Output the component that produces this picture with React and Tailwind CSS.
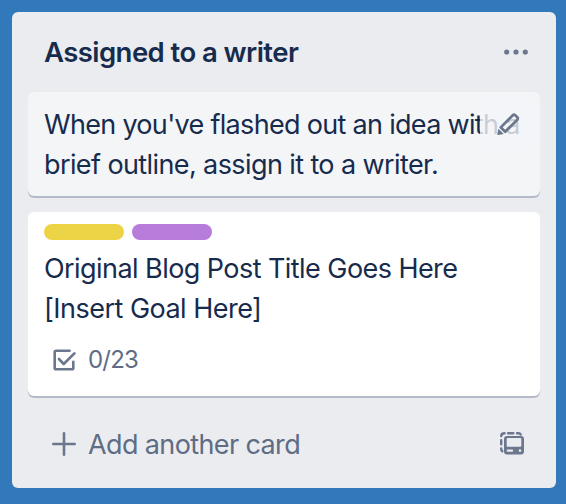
import React from 'react';

function DotsIcon() {
  return (
    <svg className="h-6 w-6" viewBox="0 0 24 24" fill="#6b778c">
      <circle cx="2.7" cy="12" r="2.6" />
      <circle cx="12" cy="12" r="2.6" />
      <circle cx="21.3" cy="12" r="2.6" />
    </svg>
  );
}

function PencilIcon() {
  return (
    <svg className="h-6 w-6" viewBox="0 0 24 24" fill="none" stroke="#6b778c" strokeWidth="2.7" strokeLinejoin="round">
      <path d="M4.8 15.4 L16.8 3.2 Q18 2 19.2 3.2 L21.3 5.3 Q22.5 6.5 21.3 7.7 L9.2 19.8 Z" />
      <path d="M2.5 16.8 L7.7 22 L2 23 Q1.2 23 1.3 22.2 Z" fill="#6b778c" stroke="none" />
    </svg>
  );
}

function ChecklistIcon() {
  return (
    <svg className="h-6 w-6" viewBox="0 0 24 24" fill="none" stroke="#6b778c" strokeWidth="2.6" strokeLinecap="round" strokeLinejoin="round">
      <path d="M17.6 2.7 H4 Q2.7 2.7 2.7 4 V20 Q2.7 21.3 4 21.3 H20 Q21.3 21.3 21.3 20 V13.8" />
      <path d="M7 11 L11.7 16 L22.4 5.4" />
    </svg>
  );
}

function PlusIcon() {
  return (
    <svg className="h-6 w-6" viewBox="0 0 24 24" stroke="#6b778c" strokeWidth="2.6" strokeLinecap="round">
      <path d="M12 1.3 V22.7 M1.3 12 H22.7" />
    </svg>
  );
}

function TemplateIcon() {
  return (
    <svg className="h-6 w-6" viewBox="0 0 24 24" fill="none" stroke="#6b778c" strokeWidth="2.4">
      <path d="M1.2 4 Q1.2 1.3 4.6 1.3" strokeLinecap="round" />
      <path d="M8.1 1.3 H13.3 M17 1.3 H18.8 Q20 1.4 20.6 2.4" strokeLinecap="round" />
      <path d="M1.2 8.1 V12.2 M1.2 16.5 V17.4 Q1.4 18.5 2.3 19.2" strokeLinecap="round" />
      <path fill="#6b778c" stroke="none" fillRule="evenodd" d="M7 4 H21 Q24 4 24 7 V19.6 Q24 22.6 21 22.6 H7 Q4 22.6 4 19.6 V7 Q4 4 7 4 Z M7.6 6 Q6.7 6 6.7 6.9 V13.8 Q6.7 14.7 7.6 14.7 H20.4 Q21.3 14.7 21.3 13.8 V6.9 Q21.3 6 20.4 6 Z M7.9 17.4 Q6.7 17.4 6.7 18.6 Q6.7 19.8 7.9 19.8 H12 Q13.2 19.8 13.2 18.6 Q13.2 17.4 12 17.4 Z M20 17.3 A1.3 1.3 0 1 0 20 19.9 A1.3 1.3 0 1 0 20 17.3 Z" />
    </svg>
  );
}

export default function App() {
  return (
    <div className="h-[504px] w-[566px] bg-[#3179ba] pt-3 pl-3 font-['Inter','Liberation_Sans',sans-serif] text-[27px] leading-10 whitespace-nowrap text-[#172b4d]">
      <section className="flex h-[476px] w-[544px] flex-col rounded-md bg-[#ebecf0] px-4">
        <header className="flex h-20 items-center justify-between pr-3 pl-4">
          <h2 className="text-[27.5px] font-semibold tracking-[-0.56px]">Assigned to a writer</h2>
          <DotsIcon />
        </header>

        <article className="relative h-[104px] rounded-md bg-[#f4f5f7] px-4 pt-[13px] shadow-[0_2px_0_#b3bac8]">
          <p className="tracking-[-0.69px]">When you've flashed out an idea with a</p>
          <p className="tracking-[-0.6px]">brief outline, assign it to a writer.</p>
          <button className="absolute top-1 right-1 flex h-14 w-14 items-center justify-center rounded-md bg-[#f4f5f7]/80">
            <PencilIcon />
          </button>
        </article>

        <article className="mt-4 h-[184px] rounded-md bg-white px-4 pt-3 shadow-[0_2px_0_#b3bac8]">
          <div className="flex gap-2">
            <span className="h-4 w-20 rounded-full bg-[#edd447]" />
            <span className="h-4 w-20 rounded-full bg-[#b87ddb]" />
          </div>
          <p className="mt-[9px] tracking-[-0.56px]">Original Blog Post Title Goes Here</p>
          <p className="tracking-[-0.52px]">[Insert Goal Here]</p>
          <div className="mt-[11px] flex h-10 items-center gap-3 pl-2 text-2xl text-[#5e6c84]">
            <ChecklistIcon />
            <span className="tracking-[-0.8px]">0/23</span>
          </div>
        </article>

        <footer className="mt-7 flex h-10 items-center pr-4 pl-6 text-[#5e6c84]">
          <PlusIcon />
          <span className="ml-3 flex-1 pt-0.5 tracking-[-0.62px]">Add another card</span>
          <TemplateIcon />
        </footer>
      </section>
    </div>
  );
}
